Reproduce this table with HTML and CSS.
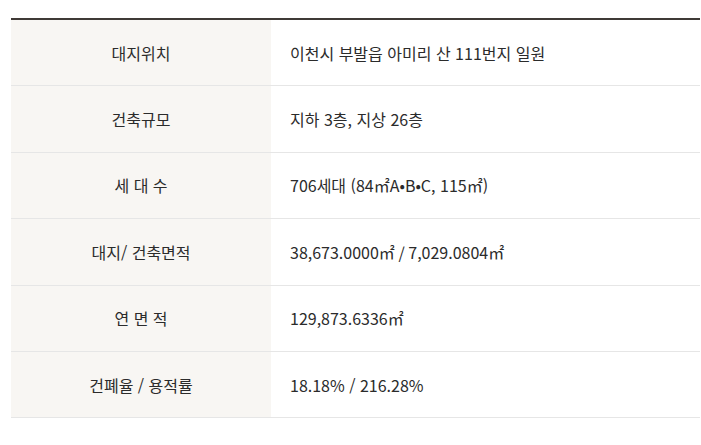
FILE: index.html
```html
<!DOCTYPE html>
<html lang="ko">
<head>
<meta charset="utf-8">
<link rel="stylesheet" href="styles.css">
</head>
<body>
<table class="spec">
  <tbody>
    <tr><th>대지위치</th><td>이천시 부발읍 아미리 산 111번지 일원</td></tr>
    <tr><th>건축규모</th><td>지하 3층, 지상 26층</td></tr>
    <tr><th>세 대 수</th><td>706세대 (84㎡A•B•C, 115㎡)</td></tr>
    <tr><th>대지/ 건축면적</th><td>38,673.0000㎡ / 7,029.0804㎡</td></tr>
    <tr><th>연 면 적</th><td>129,873.6336㎡</td></tr>
    <tr><th>건폐율 / 용적률</th><td>18.18% / 216.28%</td></tr>
  </tbody>
</table>
</body>
</html>
```
FILE: styles.css
```css
html, body {
  margin: 0;
  padding: 0;
  background: #fff;
}
body {
  padding: 18px 0 0 11px;
  font-family: "Noto Sans CJK KR", "Noto Sans", sans-serif;
  color: #333;
}
.spec {
  width: 689px;
  border-collapse: collapse;
  border-top: 2px solid #3f3a36;
}
.spec th, .spec td {
  height: 65.4px;
  padding: 0;
  border-bottom: 1px solid #e6e6e6;
  font-size: 16px;
  font-weight: 400;
  line-height: 20px;
  vertical-align: middle;
}
.spec th {
  width: 260px;
  background: #f8f6f3;
  text-align: center;
  color: #2b2b2b;
}
.spec td {
  padding-left: 19px;
  text-align: left;
  color: #2b2b2b;
}
```
